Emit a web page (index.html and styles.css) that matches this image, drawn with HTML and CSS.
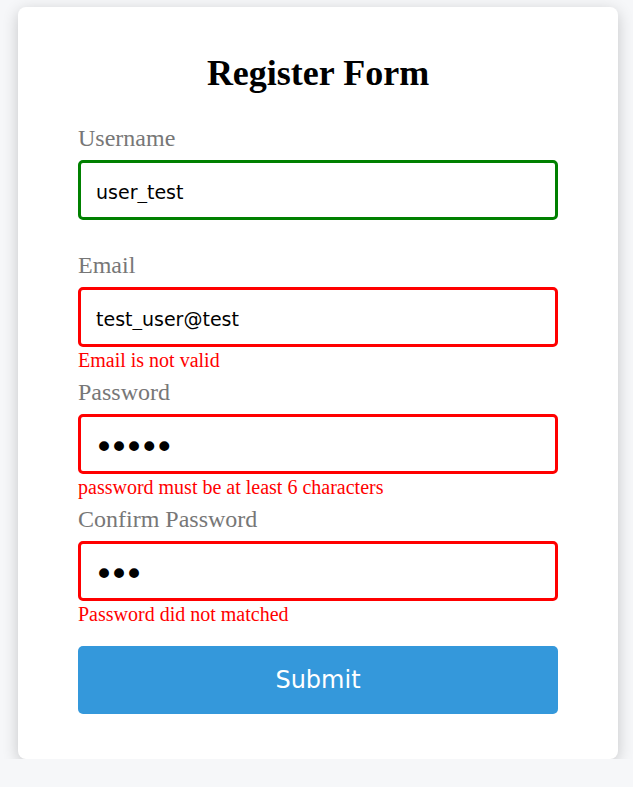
FILE: index.html
```html
<!DOCTYPE html>
<html>
<head>
<meta charset="utf-8">
<title>Register Form</title>
<link rel="stylesheet" href="styles.css">
</head>
<body>
<div class="page">
  <form class="card">
    <h1 class="title">Register Form</h1>
    <div class="field">
      <label class="label">Username</label>
      <input class="input valid" type="text" value="user_test">
      <div class="error"></div>
    </div>
    <div class="field">
      <label class="label">Email</label>
      <input class="input invalid" type="text" value="test_user@test">
      <div class="error">Email is not valid</div>
    </div>
    <div class="field">
      <label class="label">Password</label>
      <input class="input invalid" type="password" value="12345">
      <div class="error">password must be at least 6 characters</div>
    </div>
    <div class="field">
      <label class="label">Confirm Password</label>
      <input class="input invalid" type="password" value="123">
      <div class="error">Password did not matched</div>
    </div>
    <button class="submit" type="button">Submit</button>
  </form>
</div>
</body>
</html>
```

FILE: styles.css
```css
html, body {
  margin: 0;
  padding: 0;
  background: #f6f7f9;
}
.page {
  display: flex;
  padding: 7px 0 0 18px;
}
.card {
  width: 600px;
  box-sizing: border-box;
  background: #fff;
  border-radius: 8px;
  box-shadow: 0 4px 16px rgba(0, 0, 0, 0.2);
  padding: 46px 60px 45px;
  display: flex;
  flex-direction: column;
  font-family: "Liberation Serif", "Times New Roman", serif;
}
.title {
  margin: 0 0 33px;
  font-size: 36px;
  line-height: 40px;
  font-weight: bold;
  text-align: center;
  color: #000;
}
.field {
  display: flex;
  flex-direction: column;
  margin-bottom: 7px;
}
.label {
  display: block;
  height: 24px;
  font-size: 24px;
  line-height: 24px;
  color: #777;
  margin-bottom: 10px;
}
.input {
  box-sizing: border-box;
  flex: none;
  width: 480px;
  height: 60px;
  margin: 0;
  padding: 3px 15px 0;
  border: 3px solid #f00;
  border-radius: 5px;
  font-family: "DejaVu Sans", Verdana, sans-serif;
  font-size: 19px;
  color: #000;
  background: #fff;
  outline: none;
}
.input.valid {
  border-color: #008000;
}
.input[type="password"] {
  font-size: 34px;
  letter-spacing: -5px;
  padding-left: 13px;
  padding-top: 6px;
}
.error {
  height: 26px;
  font-size: 20px;
  line-height: 26px;
  color: #f00;
}
.submit {
  margin-top: 12px;
  height: 68px;
  width: 480px;
  border: none;
  border-radius: 5px;
  background: #3498db;
  color: #fff;
  font-family: "DejaVu Sans", Verdana, sans-serif;
  font-size: 24px;
  cursor: pointer;
}
```
